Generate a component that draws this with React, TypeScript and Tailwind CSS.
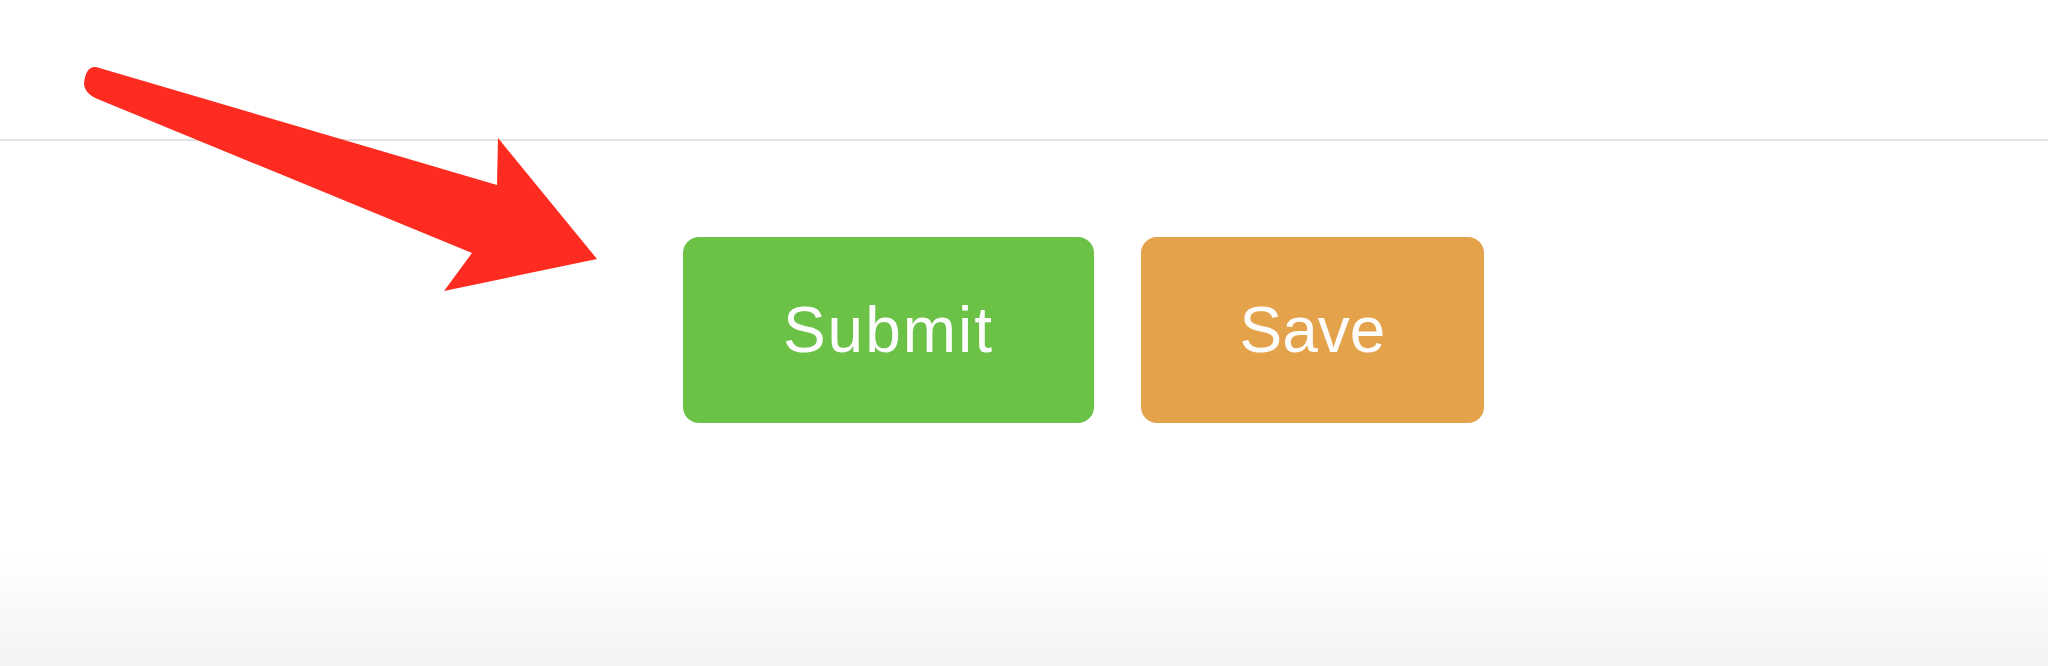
export default function App() {
  return (
    <div className="relative w-[2048px] h-[666px] overflow-hidden bg-white font-['Liberation_Sans',Arial,sans-serif]">
      <div className="h-[139px]" />
      <div className="h-[2px] bg-[#e2e2e2]" />

      <div className="flex gap-[47px] pl-[683px] pt-[96px]">
        <div className="w-[411px] h-[186px] rounded-[16px] bg-[#6cc247] flex items-center justify-center">
          <span className="text-[64px] leading-none text-[#fdfdfd] tracking-[2px]">Submit</span>
        </div>
        <div className="w-[343px] h-[186px] rounded-[16px] bg-[#e4a24a] flex items-center justify-center">
          <span className="text-[64px] leading-none text-[#fdfdfd]">Save</span>
        </div>
      </div>

      {/* grey fade at the bottom */}
      <div className="absolute left-0 right-0 bottom-0 h-[110px] bg-gradient-to-b from-white to-[#f3f3f3]" />

      {/* annotation arrow */}
      <svg className="absolute left-0 top-0" width="620" height="300" viewBox="0 0 620 300">
        <path
          d="M96 67 L497 185 L498 138 L597 259 L444 291 L472 253 L100 100 Q84 94 84 83 Q86 66 96 67 Z"
          fill="#fd2b20"
        />
      </svg>
    </div>
  );
}
